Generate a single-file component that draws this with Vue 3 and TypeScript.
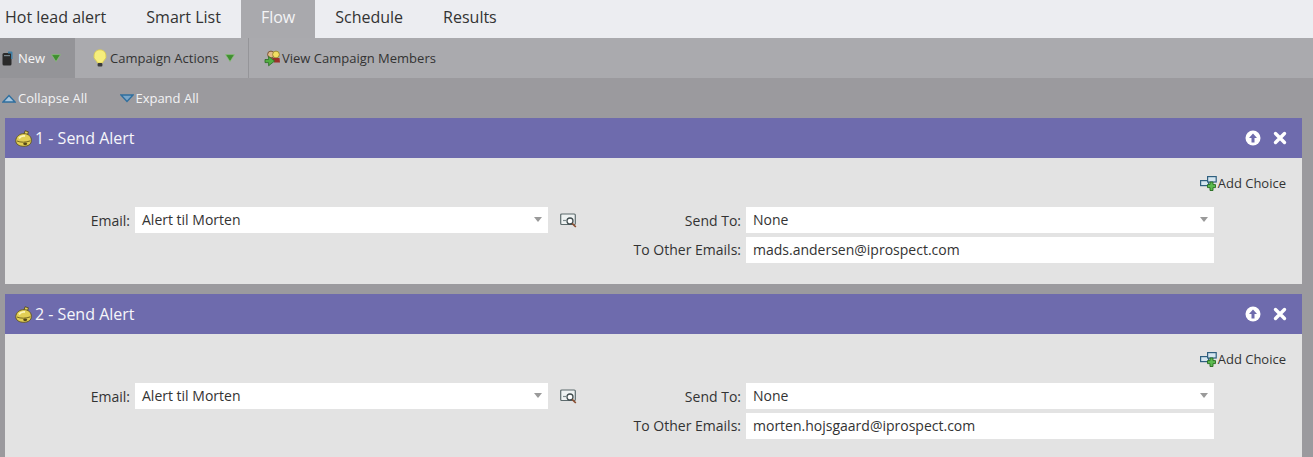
<script setup lang="ts">
interface Step {
  id: number;
  recipient: string;
}

const tabs = ["Hot lead alert", "Smart List", "Flow", "Schedule", "Results"];

const steps: Step[] = [
  { id: 1, recipient: "mads.andersen@iprospect.com" },
  { id: 2, recipient: "morten.hojsgaard@iprospect.com" },
];
</script>

<template>
  <div class="page">
    <nav class="tabs">
      <span
        v-for="tab in tabs"
        :key="tab"
        class="tab"
        :class="{ active: tab === 'Flow' }"
      >{{ tab }}</span>
    </nav>

    <div class="toolbar">
      <div class="tool tool-new">
        <svg class="ico-new" width="11" height="15" viewBox="0 0 11 15">
          <rect x="0.5" y="2" width="9" height="12.5" rx="1.5" fill="#2a2a2a" />
          <rect x="2" y="4" width="6" height="1.2" fill="#77858c" />
          <path d="M6 0.5h3.5a1 1 0 0 1 1 1V8H9V2.5H6z" fill="#3f7fa6" />
        </svg>
        <span class="tool-label light">New</span>
        <svg class="caret" width="10" height="8" viewBox="0 0 10 8"><path d="M0.5 0.6h9L5 7.6z" fill="#3f8f30" stroke="#8fc080" stroke-width="0.7" stroke-linejoin="round" /></svg>
      </div>
      <div class="tool tool-actions">
        <svg class="ico-bulb" width="16" height="18" viewBox="0 0 16 18">
          <path d="M8 0.8a6.2 6.2 0 0 0-3.7 11.1c.7.6 1 1.3 1 2.1h5.4c0-.8.3-1.5 1-2.1A6.2 6.2 0 0 0 8 .8z" fill="#f6ee7c" stroke="#d8c84e" stroke-width="0.8" />
          <rect x="5.6" y="14" width="4.8" height="3.4" rx="1" fill="#3b3b3b" />
        </svg>
        <span class="tool-label">Campaign Actions</span>
        <svg class="caret" width="10" height="8" viewBox="0 0 10 8"><path d="M0.5 0.6h9L5 7.6z" fill="#3f8f30" stroke="#8fc080" stroke-width="0.7" stroke-linejoin="round" /></svg>
      </div>
      <div class="tool tool-members">
        <svg width="18" height="17" viewBox="0 0 18 17">
          <circle cx="7" cy="4.5" r="3.4" fill="#e2b98a" stroke="#6f4a2a" stroke-width="0.9" />
          <circle cx="12" cy="4.5" r="3.4" fill="#f2de62" stroke="#8a7a2a" stroke-width="0.8" />
          <path d="M8 8h7.5l.5 4.5h-6z" fill="#9c2f28" />
          <path d="M1 9.5h3.6V6.4l6 4.6-6 4.8v-3.2H1z" fill="#52ae42" stroke="#2c6c24" stroke-width="0.8" />
        </svg>
        <span class="tool-label">View Campaign Members</span>
      </div>
    </div>

    <div class="expanders">
      <span class="expander">
        <svg width="14" height="9" viewBox="0 0 14 9"><path d="M1 8h12L7 1.5z" fill="#a9c6de" stroke="#2f6f9f" stroke-width="1.4" /></svg>
        Collapse All
      </span>
      <span class="expander">
        <svg width="14" height="9" viewBox="0 0 14 9"><path d="M1 1h12L7 7.5z" fill="#7aa6c9" stroke="#2f6f9f" stroke-width="1.4" /></svg>
        Expand All
      </span>
    </div>

    <section v-for="step in steps" :key="step.id" class="card">
      <header class="card-head">
        <svg class="ico-alert" width="17" height="17" viewBox="0 0 17 17">
          <path d="M10 0.8l3.4 1-1.2 3.8-3.2-1z" fill="#e6d25e" stroke="#4a4018" stroke-width="0.8" />
          <path d="M0.8 10.8C0.8 6.6 4.6 3.6 9 3.6s7.4 3 7.4 6.8c0 3.8-3.2 5.9-7.5 5.9-4.7 0-8.1-2-8.1-5.5z" fill="#e2cf55" stroke="#5e5220" stroke-width="0.9" />
          <path d="M4 8.4c1.4-2 3.6-2.8 6-2.4" stroke="#fbf4b4" stroke-width="1.9" fill="none" />
          <path d="M2 11c3.4 1.6 9 1.6 13.4-.2" stroke="#74661f" stroke-width="1" fill="none" />
          <ellipse cx="10.2" cy="13.8" rx="2" ry="1.4" fill="#574a18" />
        </svg>
        <span class="card-title">{{ step.id }} - Send Alert</span>
        <div class="card-actions">
          <svg width="16" height="16" viewBox="0 0 16 16">
            <circle cx="8" cy="8" r="7.5" fill="#fff" />
            <path d="M8 3.5L12 8H9.5v4.5h-3V8H4z" fill="#6e6bad" />
          </svg>
          <svg width="14" height="14" viewBox="0 0 14 14">
            <path d="M2.5 2.5l9 9M11.5 2.5l-9 9" stroke="#fff" stroke-width="3.4" stroke-linecap="round" />
          </svg>
        </div>
      </header>
      <div class="card-body">
        <div class="choice-row">
          <span class="add-choice">
            <svg width="17" height="15" viewBox="0 0 17 15">
              <rect x="0.6" y="4.6" width="8" height="5" fill="#d5e6f0" stroke="#2f5f7f" stroke-width="1.2" />
              <rect x="7.6" y="0.6" width="8.6" height="5.4" fill="#d5e6f0" stroke="#2f5f7f" stroke-width="1.2" />
              <path d="M10 6h3v2.6h2.5v3H13V14.5h-3v-2.9H7.5v-3H10z" fill="#5dbb50" stroke="#256b1e" stroke-width="0.9" />
            </svg>
            Add Choice
          </span>
        </div>
        <div class="fields">
          <div class="col-left">
            <label class="field-label">Email:</label>
            <div class="input select email-select">Alert til Morten<i class="arrow"></i></div>
            <svg class="ico-preview" width="18" height="15" viewBox="0 0 18 15">
              <rect x="0.7" y="1" width="14.6" height="10.5" rx="1" fill="#eef2f2" stroke="#5d6b6d" stroke-width="1.2" />
              <path d="M3 7.5h3" stroke="#7d8a8c" stroke-width="1.2" />
              <circle cx="10" cy="8" r="3" fill="#fff" stroke="#3f4c4e" stroke-width="1.3" />
              <path d="M12.2 10.4l3.6 3.6" stroke="#8a4f32" stroke-width="1.7" />
            </svg>
          </div>
          <div class="col-right">
            <label class="field-label">Send To:</label>
            <div class="input select">None<i class="arrow"></i></div>
            <label class="field-label other-label">To Other Emails:</label>
            <div class="input">{{ step.recipient }}</div>
          </div>
        </div>
      </div>
    </section>
  </div>
</template>

<style>
html,
body {
  margin: 0;
  overflow: hidden;
  background: #9b9a9e;
}
</style>

<style scoped>
.page {
  width: 1313px;
  height: 457px;
  overflow: hidden;
  font-family: "Open Sans", "Noto Sans", sans-serif;
  font-size: 13px;
  color: #333;
  background: #9b9a9e;
}

.tabs {
  height: 38px;
  display: flex;
  background: #ecedf1;
  font-size: 16px;
  color: #333;
}

.tab {
  display: flex;
  align-items: center;
  height: 38px;
  padding: 0 20px 4px;
  box-sizing: border-box;
}

.tab:first-child {
  padding-left: 5px;
}

.tab.active {
  background: #a9a9ad;
  color: #f4f4f6;
}

.toolbar {
  height: 40px;
  display: flex;
  align-items: stretch;
  background: #aaaaae;
}

.tool {
  display: flex;
  align-items: center;
}

.tool-new {
  width: 75px;
  box-sizing: border-box;
  padding-left: 2px;
  background: #949498;
}

.tool-actions {
  width: 174px;
  box-sizing: border-box;
  padding-left: 17px;
  border-right: 1px solid #959599;
}

.tool-members {
  padding-left: 15px;
}

.tool-label {
  color: #333;
}

.tool-label.light {
  color: #f4f4f6;
  margin-left: 5px;
}

.tool-actions .tool-label {
  margin-left: 2px;
}

.caret {
  margin-left: 6px;
}

.expanders {
  height: 40px;
  display: flex;
  align-items: center;
  gap: 33px;
  padding-left: 2px;
  color: #f2f2f4;
}

.expander {
  display: flex;
  align-items: center;
  gap: 2px;
}

.expander + .expander {
  gap: 1px;
}

.card {
  margin: 0 11px 10px 5px;
}

.card-head {
  height: 40px;
  display: flex;
  align-items: center;
  padding: 0 15px 0 10px;
  background: #6e6bad;
  color: #f6f6fa;
  font-size: 16px;
}

.card-title {
  margin-left: 3px;
}

.card-actions {
  margin-left: auto;
  display: flex;
  align-items: center;
  gap: 12px;
}

.card-body {
  height: 126px;
  background: #e3e3e3;
  box-sizing: border-box;
  padding-top: 16px;
}

.choice-row {
  height: 18px;
  display: flex;
  justify-content: flex-end;
  padding-right: 16px;
}

.add-choice {
  display: flex;
  align-items: center;
  gap: 1px;
}

.fields {
  margin-top: 15px;
  display: flex;
}

.col-left {
  width: 736px;
  display: grid;
  grid-template-columns: 125px 413px 18px;
  column-gap: 5px;
  align-items: center;
  align-self: flex-start;
  height: 26px;
}

.col-right {
  display: grid;
  grid-template-columns: 108px 468px;
  grid-auto-rows: 26px;
  column-gap: 5px;
  row-gap: 4px;
  align-items: center;
  width: 581px;
  margin-left: -108px;
}

.field-label {
  text-align: right;
  font-size: 14px;
  white-space: nowrap;
}

.other-label {
  margin-bottom: 2px;
}

.input {
  position: relative;
  height: 26px;
  line-height: 26px;
  background: #fff;
  padding-left: 7px;
  box-sizing: border-box;
  font-size: 14px;
  color: #333;
}

.arrow {
  position: absolute;
  right: 6px;
  top: 10px;
  width: 0;
  height: 0;
  border-left: 4.5px solid transparent;
  border-right: 4.5px solid transparent;
  border-top: 5px solid #9a9a9a;
}

.ico-preview {
  margin-left: 7px;
}
</style>
